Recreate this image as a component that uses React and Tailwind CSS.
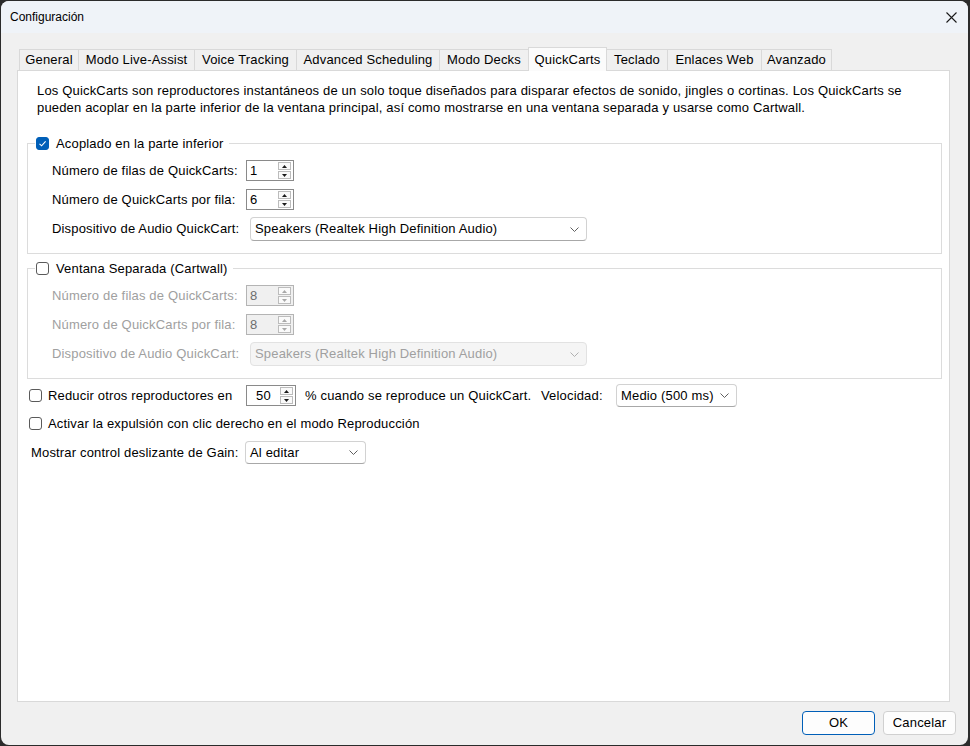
import { useState } from 'react';

const TABS = [
    { label: 'General', w: 'w-[59px]' },
    { label: 'Modo Live-Assist', w: 'w-[116px]' },
    { label: 'Voice Tracking', w: 'w-[102px]' },
    { label: 'Advanced Scheduling', w: 'w-[143px]' },
    { label: 'Modo Decks', w: 'w-[89px]' },
    { label: 'QuickCarts', w: 'w-[79px]' },
    { label: 'Teclado', w: 'w-[61px]' },
    { label: 'Enlaces Web', w: 'w-[94px]' },
    { label: 'Avanzado', w: 'w-[71px]' },
];

const Checkbox = ({ checked, onChange }) => (
    <button
        type="button"
        onClick={onChange}
        className={`w-[13px] h-[13px] rounded-[3px] shrink-0 flex items-center justify-center ${
            checked ? 'bg-[#005fb8] border border-[#005fb8]' : 'bg-white border border-[#5a5a5a]'
        }`}
    >
        {checked && (
            <svg width="9" height="9" viewBox="0 0 9 9">
                <path d="M1.5 4.8 L3.6 6.8 L7.6 2.4" fill="none" stroke="white" strokeWidth="1.1" />
            </svg>
        )}
    </button>
);

const Arrow = ({ up, disabled }) => (
    <div className="w-[13px] h-[8px] border border-[#bcbcbc] bg-[#fafafa] flex items-center justify-center">
        <svg width="5" height="3" viewBox="0 0 5 3">
            <path d={up ? 'M0 3 L2.5 0 L5 3 Z' : 'M0 0 L5 0 L2.5 3 Z'} fill={disabled ? '#a8a8a8' : '#1a1a1a'} />
        </svg>
    </div>
);

const Spin = ({ value, disabled, center, w = 'w-[48px]' }) => (
    <div
        className={`${w} h-[21px] border flex items-center justify-between pr-[2px] ${
            disabled ? 'border-[#b4b4b4] bg-[#f0f0f0] text-[#6d6d6d]' : 'border-[#8a8a8a] bg-white text-black'
        }`}
    >
        <span className={center ? 'flex-1 text-center' : 'pl-[3px]'}>{value}</span>
        <div className="flex flex-col gap-px">
            <Arrow up disabled={disabled} />
            <Arrow disabled={disabled} />
        </div>
    </div>
);

const Select = ({ value, disabled, w, h = 'h-[24px]' }) => (
    <div
        className={`${w} ${h} rounded-[4px] border flex items-center justify-between pl-[4px] pr-[7px] ${
            disabled
                ? 'border-[#e2e2e2] bg-[#f5f5f5] text-[#a0a0a0]'
                : 'border-[#d2d2d2] border-b-[#a8a8a8] bg-white text-black'
        }`}
    >
        <span className="text-[13px]">{value}</span>
        <svg width="9" height="5" viewBox="0 0 9 5">
            <path d="M0.5 0.5 L4.5 4.5 L8.5 0.5" fill="none" stroke={disabled ? '#b0b0b0' : '#5f5f5f'} strokeWidth="1" />
        </svg>
    </div>
);

const CartGroup = ({ title, checked, onToggle, rows, perRow, disabled }) => {
    const labelColor = disabled ? 'text-[#a0a0a0]' : 'text-black';
    return (
        <fieldset className="border border-[#dcdcdc] ml-[9px] mr-[7px] pb-[12px]">
            <legend className="ml-[7px] px-[1px] h-[17px] flex items-center gap-[7px] text-[13px] bg-white">
                <Checkbox checked={checked} onChange={onToggle} />
                <span className="pr-[4px]">{title}</span>
            </legend>
            <div className="pl-[24px] pt-[8px] flex flex-col text-[13px]">
                <div className="flex items-center h-[21px]">
                    <span className={`w-[194px] ${labelColor}`}>Número de filas de QuickCarts:</span>
                    <Spin value={rows} disabled={disabled} />
                </div>
                <div className="flex items-center h-[21px] mt-[8px]">
                    <span className={`w-[194px] ${labelColor}`}>Número de QuickCarts por fila:</span>
                    <Spin value={perRow} disabled={disabled} />
                </div>
                <div className="flex items-center h-[24px] mt-[7px]">
                    <span className={`w-[198px] ${labelColor}`}>Dispositivo de Audio QuickCart:</span>
                    <Select value="Speakers (Realtek High Definition Audio)" disabled={disabled} w="w-[337px]" />
                </div>
            </div>
        </fieldset>
    );
};

export default function App() {
    const [docked, setDocked] = useState(true);
    const [cartwall, setCartwall] = useState(false);
    const [duck, setDuck] = useState(false);
    const [eject, setEject] = useState(false);

    return (
        <div className="w-[970px] h-[746px] bg-[#2b2b2b] p-px pr-[2px] font-['Liberation_Sans',Arial,sans-serif] text-[12px] tracking-[0.17px] text-black">
            <div className="h-full rounded-[8px] overflow-hidden bg-[#f0f0f0] flex flex-col">
                {/* title bar */}
                <div className="h-[32px] bg-[#eff3f8] flex items-center justify-between pl-[9px] pr-[10px] shrink-0">
                    <span className="text-[12px] tracking-normal">Configuración</span>
                    <svg width="11" height="11" viewBox="0 0 11 11" className="mr-[1px]">
                        <path d="M0.5 0.5 L10.5 10.5 M10.5 0.5 L0.5 10.5" stroke="#1a1a1a" strokeWidth="1.1" />
                    </svg>
                </div>

                <div className="flex-1 flex flex-col pl-[16px] pr-[18px] pt-[14px]">
                    {/* tab strip */}
                    <div className="flex items-end h-[23px] pl-[2px] relative z-10">
                        {TABS.map((t, i) => {
                            const active = t.label === 'QuickCarts';
                            const last = i === TABS.length - 1;
                            return (
                                <div
                                    key={t.label}
                                    className={`${t.w} flex items-center justify-center text-[13px] border-t border-l border-[#d9d9d9] ${
                                        active ? 'h-[24px] -mb-px bg-[#fbfbfb] border-r -mr-px relative' : 'h-[21px] bg-[#f0f0f0]'
                                    } ${last ? 'border-r' : ''}`}
                                >
                                    {t.label}
                                </div>
                            );
                        })}
                    </div>

                    {/* tab panel */}
                    <div className="h-[632px] bg-white border border-[#d9d9d9] flex flex-col text-[13px]">
                        <p className="px-[19px] pt-[11px] leading-[17px] text-[13px]">
                            Los QuickCarts son reproductores instantáneos de un solo toque diseñados para disparar efectos de sonido, jingles o cortinas. Los QuickCarts se pueden acoplar en la parte inferior de la ventana principal, así como mostrarse en una ventana separada y usarse como Cartwall.
                        </p>

                        <div className="mt-[19px]">
                            <CartGroup
                                title="Acoplado en la parte inferior"
                                checked={docked}
                                onToggle={() => setDocked(!docked)}
                                rows="1"
                                perRow="6"
                            />
                        </div>
                        <div className="mt-[6px]">
                            <CartGroup
                                title="Ventana Separada (Cartwall)"
                                checked={cartwall}
                                onToggle={() => setCartwall(!cartwall)}
                                rows="8"
                                perRow="8"
                                disabled={!cartwall}
                            />
                        </div>

                        <div className="flex items-center h-[23px] mt-[5px] pl-[11px]">
                            <Checkbox checked={duck} onChange={() => setDuck(!duck)} />
                            <span className="ml-[6px] w-[198px]">Reducir otros reproductores en</span>
                            <Spin value="50" center w="w-[50px]" />
                            <span className="ml-[9px] w-[236px]">% cuando se reproduce un QuickCart.</span>
                            <span className="w-[75px]">Velocidad:</span>
                            <Select value="Medio (500 ms)" w="w-[121px]" h="h-[23px]" />
                        </div>

                        <div className="flex items-center h-[17px] mt-[8px] pl-[11px]">
                            <Checkbox checked={eject} onChange={() => setEject(!eject)} />
                            <span className="ml-[6px]">Activar la expulsión con clic derecho en el modo Reproducción</span>
                        </div>

                        <div className="flex items-center h-[23px] mt-[9px] pl-[13px]">
                            <span className="w-[214px]">Mostrar control deslizante de Gain:</span>
                            <Select value="Al editar" w="w-[121px]" h="h-[23px]" />
                        </div>
                    </div>

                    {/* dialog buttons */}
                    <div className="flex justify-end gap-[8px] mt-[9px] -mr-[6px]">
                        <button className="w-[73px] h-[24px] rounded-[4px] border border-[#005fb8] bg-[#fdfdfd] text-[13px]">
                            OK
                        </button>
                        <button className="w-[73px] h-[24px] rounded-[4px] border border-[#d0d0d0] bg-[#fdfdfd] text-[13px]">
                            Cancelar
                        </button>
                    </div>
                </div>
            </div>
        </div>
    );
}
